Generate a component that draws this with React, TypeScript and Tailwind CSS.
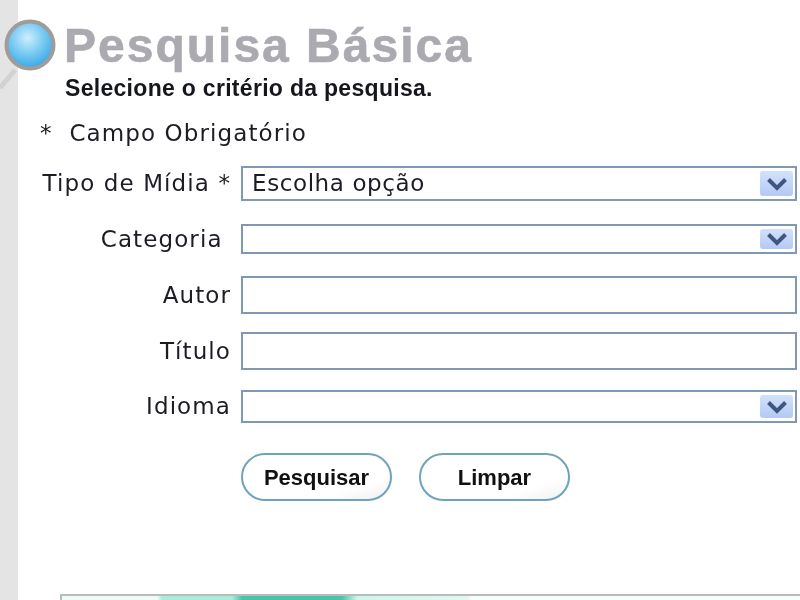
import React from 'react';

const labelFont = "font-['DejaVu_Sans','Liberation_Sans',sans-serif] tracking-[1.1px]";

function Arrow() {
  return (
    <span className="flex shrink-0 items-center justify-center w-[33px] my-[3px] rounded-[3px] bg-gradient-to-b from-[#d3e1fb] to-[#b4c9f3]">
      <svg width="22" height="14" viewBox="0 0 22 14">
        <path d="M2.5 2.5 L11 11 L19.5 2.5" fill="none" stroke="#3f5680" strokeWidth="4" />
      </svg>
    </span>
  );
}

function Row({ label, className, children }: { label: string; className: string; children: React.ReactNode }) {
  return (
    <div className={`flex shrink-0 items-center ${className}`}>
      <label className={`w-[213px] shrink-0 text-right whitespace-pre text-[23px] leading-none text-[#1c1c24] ${labelFont}`}>
        {label}
      </label>
      <div className="ml-[10px] mr-[3px] flex-1 h-full">{children}</div>
    </div>
  );
}

function SelectBox({ value }: { value?: string }) {
  return (
    <div className="flex items-stretch justify-between h-full pl-[9px] pr-[2px] border-2 border-[#7f99b5] bg-white">
      <span className="self-center font-['DejaVu_Sans','Liberation_Sans',sans-serif] text-[23px] leading-none tracking-[0.6px] text-[#1c1c24]">{value}</span>
      <Arrow />
    </div>
  );
}

function Btn({ text }: { text: string }) {
  return (
    <button className="w-[151px] h-[48px] rounded-[24px] border-2 border-[#6fa3bd] bg-gradient-to-br from-white via-white via-75% to-[#f0f0f0] font-['Liberation_Sans',sans-serif] font-bold text-[22px] text-[#111]">
      {text}
    </button>
  );
}

export default function App() {
  return (
    <div className="relative flex w-[800px] h-[600px] overflow-hidden bg-white blur-[0.6px]">
      <div className="w-[18px] shrink-0 bg-[#e4e4e4]" />

      {/* lupa */}
      <svg className="absolute left-0 top-[18px]" width="60" height="80" viewBox="0 0 60 80">
        <defs>
          <radialGradient id="lens" cx="45%" cy="35%" r="70%">
            <stop offset="0%" stopColor="#cfeefc" />
            <stop offset="45%" stopColor="#7fcdf3" />
            <stop offset="100%" stopColor="#2ba3e4" />
          </radialGradient>
        </defs>
        <path d="M15 52 L0 70" stroke="#d2d2d2" strokeWidth="5" />
        <circle cx="30" cy="27" r="23.5" fill="url(#lens)" stroke="#a09c9a" strokeWidth="4" />
      </svg>

      <div className="flex-1 flex flex-col min-w-0">
        <h1 className="shrink-0 ml-[46px] mt-[21px] h-[50px] font-['Liberation_Sans',sans-serif] font-bold text-[48px] leading-[50px] tracking-[2px] [-webkit-text-stroke:0.6px_#aaaab0] text-[#aaaab0] whitespace-nowrap">
          Pesquisa Básica
        </h1>
        <p className="shrink-0 ml-[47px] mt-[4px] font-['Liberation_Sans',sans-serif] font-bold text-[23px] leading-[26px] tracking-[0.3px] text-[#15171c] whitespace-nowrap">
          Selecione o critério da pesquisa.
        </p>
        <p className={`shrink-0 ml-[22px] mt-[19px] text-[23px] leading-[26px] text-[#1c1c24] whitespace-pre ${labelFont}`}>
          {'*  Campo Obrigatório'}
        </p>

        <Row label="Tipo de Mídia *" className="mt-[20px] h-[35px]">
          <SelectBox value="Escolha opção" />
        </Row>
        <Row label="Categoria " className="mt-[23px] h-[30px]">
          <SelectBox />
        </Row>
        <Row label="Autor" className="mt-[22px] h-[38px]">
          <input className="block w-full h-full border-2 border-[#7f99b5] bg-white" />
        </Row>
        <Row label="Título" className="mt-[18px] h-[38px]">
          <input className="block w-full h-full border-2 border-[#7f99b5] bg-white" />
        </Row>
        <Row label="Idioma" className="mt-[20px] h-[33px]">
          <SelectBox />
        </Row>

        <div className="shrink-0 ml-[223px] mt-[30px] flex gap-[27px]">
          <Btn text="Pesquisar" />
          <Btn text="Limpar" />
        </div>

        {/* painel cortado no fim da página */}
        <div className="shrink-0 ml-[42px] mt-[93px] h-[20px] border-t-2 border-l-2 border-[#b9bdb8] bg-[linear-gradient(to_right,#eefcf8_0,#eefcf8_95px,#a9ecdc_100px,#a9ecdc_170px,#48c4a8_180px,#48c4a8_280px,#cff5ea_295px,#e0f8f1_405px,#f4fefa_410px)]" />
      </div>
    </div>
  );
}
